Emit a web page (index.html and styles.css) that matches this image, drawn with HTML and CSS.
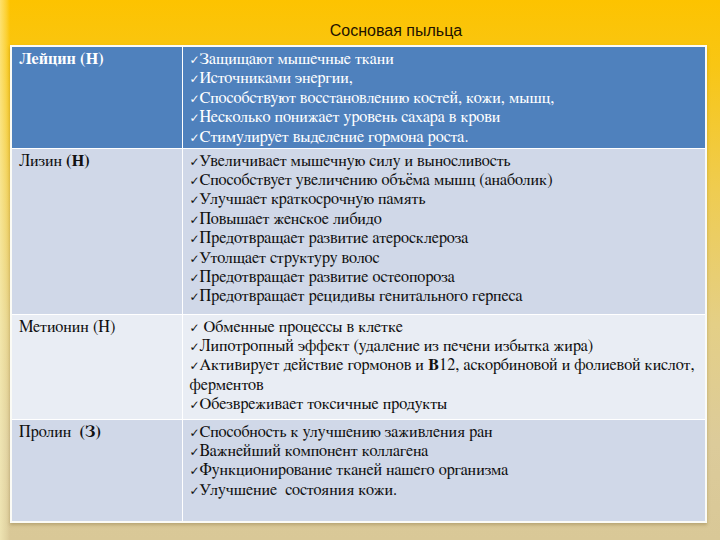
FILE: index.html
```html
<!DOCTYPE html>
<html lang="ru">
<head>
<meta charset="utf-8">
<title>Сосновая пыльца</title>
<link rel="stylesheet" href="styles.css">
</head>
<body>
<div class="slide">
  <h1 class="title">Сосновая пыльца</h1>
  <table class="grid">
    <tr class="row head">
      <td class="name"><b>Лейцин (Н)</b></td>
      <td class="list">
        <div><span class="ck">✓</span>Защищают мышечные ткани</div>
        <div><span class="ck">✓</span>Источниками энергии,</div>
        <div><span class="ck">✓</span>Способствуют восстановлению костей, кожи, мышц,</div>
        <div><span class="ck">✓</span>Несколько понижает уровень сахара в крови</div>
        <div><span class="ck">✓</span>Стимулирует выделение гормона роста.</div>
      </td>
    </tr>
    <tr class="row r2">
      <td class="name">Лизин <span class="semi">(Н)</span></td>
      <td class="list">
        <div><span class="ck">✓</span>Увеличивает мышечную силу и выносливость</div>
        <div><span class="ck">✓</span>Способствует увеличению объёма мышц (анаболик)</div>
        <div><span class="ck">✓</span>Улучшает краткосрочную память</div>
        <div><span class="ck">✓</span>Повышает женское либидо</div>
        <div><span class="ck">✓</span>Предотвращает развитие атеросклероза</div>
        <div><span class="ck">✓</span>Утолщает структуру волос</div>
        <div><span class="ck">✓</span>Предотвращает развитие остеопороза</div>
        <div><span class="ck">✓</span>Предотвращает рецидивы генитального герпеса</div>
      </td>
    </tr>
    <tr class="row r3">
      <td class="name">Метионин (Н)</td>
      <td class="list">
        <div><span class="ck">✓</span> Обменные процессы в клетке</div>
        <div><span class="ck">✓</span>Липотропный эффект (удаление из печени избытка жира)</div>
        <div><span class="ck">✓</span>Активирует действие гормонов и <span class="semi">В</span>12, аскорбиновой и фолиевой кислот, ферментов</div>
        <div><span class="ck">✓</span>Обезвреживает токсичные продукты</div>
      </td>
    </tr>
    <tr class="row r4">
      <td class="name">Пролин&nbsp; <span class="semi">(З)</span></td>
      <td class="list">
        <div><span class="ck">✓</span>Способность к улучшению заживления ран</div>
        <div><span class="ck">✓</span>Важнейший компонент коллагена</div>
        <div><span class="ck">✓</span>Функционирование тканей нашего организма</div>
        <div><span class="ck">✓</span>Улучшение&nbsp; состояния кожи.</div>
      </td>
    </tr>
  </table>
</div>
</body>
</html>
```
FILE: styles.css
```css
html, body {
  margin: 0;
  padding: 0;
}
body {
  width: 720px;
  height: 540px;
  overflow: hidden;
  background: linear-gradient(180deg, #fdc300 0%, #f8c614 12%, #efcc50 35%, #e4cf86 60%, #dccb9a 82%, #d9c897 100%);
}
.slide {
  width: 720px;
  height: 540px;
  padding: 0 0 0 10px;
  box-sizing: border-box;
  background: linear-gradient(90deg, rgba(255,250,200,0.55) 0px, rgba(255,250,200,0.25) 6px, rgba(255,250,200,0) 10px);
}
.title {
  margin: 0;
  height: 45px;
  box-sizing: border-box;
  padding-top: 21px;
  padding-left: 62px;
  text-align: center;
  font-family: "Liberation Sans", Arial, sans-serif;
  font-weight: normal;
  font-size: 16px;
  line-height: 20px;
  color: #1e1200;
}
.grid {
  width: 697px;
  border-collapse: collapse;
  border: 2px solid #fbfbf6;
  box-shadow: 0 2px 3px rgba(120,100,50,0.35);
}
.grid td {
  font-family: FreeSerif, "Noto Serif", "DejaVu Serif", serif;
  font-size: 16.3px;
  line-height: 19.4px;
  color: #111;
  border: 1px solid #ffffff;
  vertical-align: top;
  padding: 3px 7px 0 7px;
  box-sizing: border-box;
}
.grid td.list {
  padding-right: 0;
}
.name {
  width: 171px;
}
.head {
  background: #4f81bd;
  height: 102px;
}
.grid .head td {
  color: #ffffff;
}
.r2 {
  background: #d0d8e8;
  height: 166px;
}
.r3 {
  background: #e9edf4;
  height: 105px;
}
.r4 {
  background: #d0d8e8;
  height: 103px;
}
.ck {
  font-family: "DejaVu Sans", sans-serif;
  font-size: 12px;
  line-height: 10px;
  display: inline-block;
  width: 10px;
}
.semi {
  font-weight: bold;
}
```
